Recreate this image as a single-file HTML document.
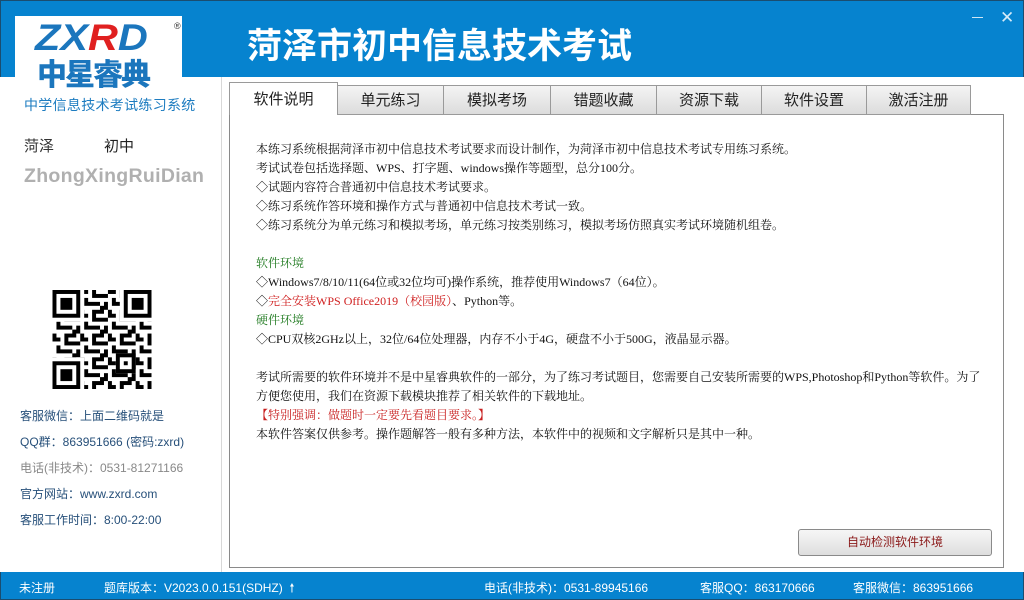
<!DOCTYPE html>
<html><head><meta charset="utf-8"><style>
*{margin:0;padding:0;box-sizing:border-box}
body{width:1024px;height:600px;overflow:hidden;background:#fff;font-family:"Liberation Sans","Noto Sans CJK SC",sans-serif;position:relative}
.abs{position:absolute}
#top{left:0;top:0;width:1024px;height:77px;background:#0683cf;border:1px solid #1a4d70;border-bottom:none}
#logo{left:15px;top:16px;width:167px;height:62px;background:#fff}
#left{left:1px;top:77px;width:221px;height:495px;background:#fff;border-right:1px solid #d8d8d8}
.tab{top:85px;height:30px;background:linear-gradient(#f4f4f4,#dcdcdc);border:1px solid #9a9a9a;font-size:15px;color:#222;text-align:center;line-height:30px}
#content{left:229px;top:114px;width:775px;height:454px;border:1px solid #8a8a8a;background:#fff}
.l{position:absolute;left:26px;font-size:12px;color:#111;white-space:nowrap;font-family:"Liberation Serif","Noto Serif CJK SC",serif}
.lt{position:absolute;left:20px;font-size:12px;color:#27507a;white-space:nowrap}
#status{left:0;top:572px;width:1024px;height:28px;background:#0683cf;color:#fff;font-size:12px;border:1px solid #1a4d70;border-top:none}
#status span{position:absolute;top:7px;white-space:nowrap}
</style></head><body>
<div id="top" class="abs"></div>
<div class="abs" style="left:1000px;top:8px;color:#d6ebf8;font-size:17px">✕</div>
<div class="abs" style="left:972px;top:17px;width:11px;height:1px;background:#cfe6f5"></div>
<div id="left" class="abs"></div>
<div id="logo" class="abs">
 <div class="abs" style="left:20px;top:4px;font:italic 900 37px 'Liberation Sans';color:#1b76bd;line-height:36px;transform:scaleX(1.12);transform-origin:left">ZX<span style="color:#e02020">R</span>D</div>
 <div class="abs" style="left:159px;top:5px;font-size:9px;color:#333">®</div>
 <div class="abs" style="left:22px;top:41px;font:900 30px 'Noto Sans CJK SC';color:#1b76bd;line-height:30px;letter-spacing:-2px">中星睿典</div>
</div>
<div class="abs" style="left:24px;top:95px;font-size:14px;color:#1d7cc0;letter-spacing:0.3px">中学信息技术考试练习系统</div>
<div class="abs" style="left:24px;top:135px;font-size:15px;color:#333">菏泽</div>
<div class="abs" style="left:104px;top:135px;font-size:15px;color:#222">初中</div>
<div class="abs" style="left:24px;top:165px;font:bold 19.5px 'Liberation Sans';color:#b0b0b0;letter-spacing:0.3px">ZhongXingRuiDian</div>
<svg class="abs" style="left:52px;top:290px" width="100" height="99" viewBox="0 0 25 25">
<defs><pattern id="p" width="7" height="6" patternUnits="userSpaceOnUse">
<rect x="0" y="0" width="2" height="1"/><rect x="3" y="0" width="1" height="2"/><rect x="5" y="1" width="2" height="1"/><rect x="1" y="2" width="1" height="2"/><rect x="2" y="3" width="3" height="1"/><rect x="6" y="3" width="1" height="2"/><rect x="0" y="5" width="1" height="1"/><rect x="3" y="5" width="2" height="1"/><rect x="4" y="1" width="1" height="1"/><rect x="5" y="4" width="1" height="2"/></pattern></defs>
<rect width="25" height="25" fill="#fff"/>
<rect width="25" height="25" fill="url(#p)"/>
<rect x="0" y="0" width="8" height="8" fill="#fff"/><rect x="17" y="0" width="8" height="8" fill="#fff"/><rect x="0" y="17" width="8" height="8" fill="#fff"/>
<g fill="none" stroke="#000"><rect x="0.5" y="0.5" width="6" height="6"/><rect x="18.5" y="0.5" width="6" height="6"/><rect x="0.5" y="18.5" width="6" height="6"/></g>
<rect x="2" y="2" width="3" height="3"/><rect x="20" y="2" width="3" height="3"/><rect x="2" y="20" width="3" height="3"/>
<rect x="16" y="16" width="5" height="5"/><rect x="17" y="17" width="3" height="3" fill="#fff"/><rect x="18" y="18" width="1" height="1"/>
</svg>
<div class="lt" style="top:407px">客服微信：上面二维码就是</div>
<div class="lt" style="top:433px">QQ群：863951666 (密码:zxrd)</div>
<div class="lt" style="top:459px;color:#888">电话(非技术)：0531-81271166</div>
<div class="lt" style="top:485px">官方网站：www.zxrd.com</div>
<div class="lt" style="top:511px">客服工作时间：8:00-22:00</div>
<div class="abs" style="left:247px;top:19px;font:bold 35px 'Noto Sans CJK SC',sans-serif;color:#fff;line-height:50px;letter-spacing:0px">菏泽市初中信息技术考试</div>
<div id="content" class="abs">
<div class="l" style="top:25px">本练习系统根据菏泽市初中信息技术考试要求而设计制作，为菏泽市初中信息技术考试专用练习系统。</div>
<div class="l" style="top:44px">考试试卷包括选择题、WPS、打字题、windows操作等题型，总分100分。</div>
<div class="l" style="top:63px">◇试题内容符合普通初中信息技术考试要求。</div>
<div class="l" style="top:82px">◇练习系统作答环境和操作方式与普通初中信息技术考试一致。</div>
<div class="l" style="top:101px">◇练习系统分为单元练习和模拟考场，单元练习按类别练习，模拟考场仿照真实考试环境随机组卷。</div>
<div class="l" style="top:139px;color:#1f7a1f">软件环境</div>
<div class="l" style="top:158px">◇Windows7/8/10/11(64位或32位均可)操作系统，推荐使用Windows7（64位）。</div>
<div class="l" style="top:177px">◇<span style="color:#d02020">完全安装WPS Office2019（校园版）</span>、Python等。</div>
<div class="l" style="top:196px;color:#1f7a1f">硬件环境</div>
<div class="l" style="top:215px">◇CPU双核2GHz以上，32位/64位处理器，内存不小于4G，硬盘不小于500G，液晶显示器。</div>
<div class="l" style="top:253px">考试所需要的软件环境并不是中星睿典软件的一部分，为了练习考试题目，您需要自己安装所需要的WPS,Photoshop和Python等软件。为了</div>
<div class="l" style="top:272px">方便您使用，我们在资源下载模块推荐了相关软件的下载地址。</div>
<div class="l" style="top:291px;color:#c81e1e">【特别强调：做题时一定要先看题目要求。】</div>
<div class="l" style="top:310px">本软件答案仅供参考。操作题解答一般有多种方法，本软件中的视频和文字解析只是其中一种。</div>
<div class="abs" style="left:568px;top:414px;width:194px;height:27px;border:1px solid #8a8a8a;border-radius:3px;background:linear-gradient(#f6f6f6,#dedede);font-size:12px;color:#8b1a1a;text-align:center;line-height:25px">自动检测软件环境</div>
</div>
<div class="abs tab" style="left:229px;top:82px;width:109px;height:33px;background:#fff;border-bottom:none;line-height:34px">软件说明</div>
<div class="abs tab" style="left:337px;width:107px">单元练习</div>
<div class="abs tab" style="left:443px;width:108px">模拟考场</div>
<div class="abs tab" style="left:550px;width:107px">错题收藏</div>
<div class="abs tab" style="left:656px;width:106px">资源下载</div>
<div class="abs tab" style="left:761px;width:106px">软件设置</div>
<div class="abs tab" style="left:866px;width:105px">激活注册</div>
<div id="status" class="abs">
<span style="left:18px">未注册</span>
<span style="left:103px">题库版本：V2023.0.0.151(SDHZ) &nbsp;🠕</span>
<span style="left:483px">电话(非技术)：0531-89945166</span>
<span style="left:699px">客服QQ：863170666</span>
<span style="left:852px">客服微信：863951666</span>
</div>
</body></html>
